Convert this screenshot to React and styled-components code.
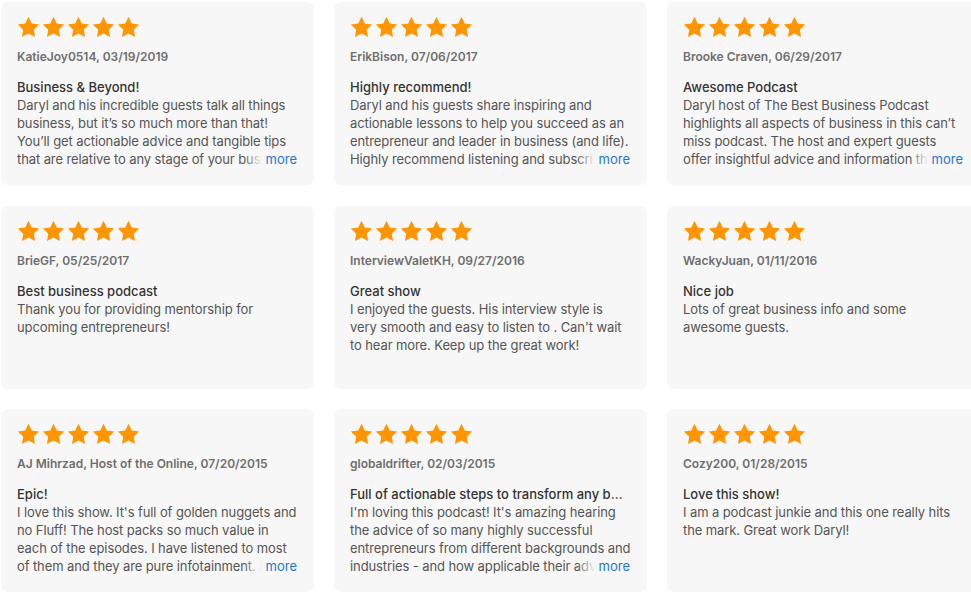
import React from "react";
import styled, { createGlobalStyle } from "styled-components";

const GlobalStyle = createGlobalStyle`
    html, body {
        margin: 0;
        padding: 0;
        background: #ffffff;
        overflow: hidden;
    }
    body {
        font-family: Inter, "Noto Sans", "Liberation Sans", sans-serif;
        -webkit-font-smoothing: antialiased;
    }
`

const Page = styled.div`
    padding: 2px 0 0 1px;
    width: 1100px;
`

const Grid = styled.div`
    display: grid;
    grid-template-columns: repeat(3, 313px);
    grid-auto-rows: 183px;
    column-gap: 20px;
    row-gap: 20.5px;
`

const Card = styled.div`
    background-color: #f7f7f7;
    border-radius: 7px;
    padding: 13px 15px 0 16px;
    box-sizing: border-box;
    display: flex;
    flex-direction: column;
    overflow: hidden;
`

const Stars = styled.div`
    display: flex;
    height: 25px;
    margin-left: -1px;
`

const Author = styled.div`
    margin-top: 9px;
    font-size: 12px;
    line-height: 16px;
    font-weight: 600;
    color: #6e6e6e;
    white-space: nowrap;
`

const Title = styled.div`
    margin-top: 13px;
    font-size: 13px;
    line-height: 18px;
    font-weight: 500;
    color: #333333;
    white-space: nowrap;
    overflow: hidden;
    text-overflow: ellipsis;
    padding-right: 2px;
`

const BodyWrap = styled.div`
    position: relative;
    max-height: 72px;
    overflow: hidden;
`

const Body = styled.p`
    margin: 0;
    font-size: 13px;
    line-height: 18px;
    color: #555555;
    letter-spacing: -0.1px;
`

const More = styled.a`
    position: absolute;
    right: 2px;
    bottom: 0;
    line-height: 18px;
    font-size: 13px;
    color: #1f76d2;
    padding-left: 22px;
    background: linear-gradient(to right, rgba(247, 247, 247, 0), #f7f7f7 18px);
    cursor: pointer;
`

function Star(){
    return(
        <svg width="25" height="25" viewBox="0 0 24 24">
            <path fill="#ff9500" d="M12 1.6l3.1 6.5 7.1 1-5.15 4.95 1.25 7.05L12 17.75 5.7 21.1l1.25-7.05L1.8 9.1l7.1-1z" />
        </svg>
    )
}

const reviews = [
    {
        author: "KatieJoy0514, 03/19/2019",
        title: "Business & Beyond!",
        body: "Daryl and his incredible guests talk all things business, but it’s so much more than that! You’ll get actionable advice and tangible tips that are relative to any stage of your business and life journey so far.",
        more: true,
    },
    {
        author: "ErikBison, 07/06/2017",
        title: "Highly recommend!",
        body: "Daryl and his guests share inspiring and actionable lessons to help you succeed as an entrepreneur and leader in business (and life). Highly recommend listening and subscribing to this podcast today.",
        more: true,
    },
    {
        author: "Brooke Craven, 06/29/2017",
        title: "Awesome Podcast",
        body: "Daryl host of The Best Business Podcast highlights all aspects of business in this can’t miss podcast. The host and expert guests offer insightful advice and information that will help you grow.",
        more: true,
    },
    {
        author: "BrieGF, 05/25/2017",
        title: "Best business podcast",
        body: "Thank you for providing mentorship for upcoming entrepreneurs!",
    },
    {
        author: "InterviewValetKH, 09/27/2016",
        title: "Great show",
        body: "I enjoyed the guests. His interview style is very smooth and easy to listen to . Can't wait to hear more. Keep up the great work!",
    },
    {
        author: "WackyJuan, 01/11/2016",
        title: "Nice job",
        body: "Lots of great business info and some awesome guests.",
    },
    {
        author: "AJ Mihrzad, Host of the Online, 07/20/2015",
        title: "Epic!",
        body: "I love this show. It's full of golden nuggets and no Fluff! The host packs so much value in each of the episodes. I have listened to most of them and they are pure infotainment. I highly recommend it.",
        more: true,
    },
    {
        author: "globaldrifter, 02/03/2015",
        title: "Full of actionable steps to transform any business",
        body: "I'm loving this podcast! It's amazing hearing the advice of so many highly successful entrepreneurs from different backgrounds and industries - and how applicable their advice is to my own journey.",
        more: true,
    },
    {
        author: "Cozy200, 01/28/2015",
        title: "Love this show!",
        body: "I am a podcast junkie and this one really hits the mark. Great work Daryl!",
    },
]

function Review({ review }){
    return(
        <Card>
            <Stars>
                {[0, 1, 2, 3, 4].map((i) => <Star key={i} />)}
            </Stars>
            <Author>{review.author}</Author>
            <Title>{review.title}</Title>
            <BodyWrap>
                <Body>{review.body}</Body>
                {review.more ? <More>more</More> : null}
            </BodyWrap>
        </Card>
    )
}

function App(){
    return(
        <Page>
            <GlobalStyle />
            <Grid>
                {reviews.map((r) => <Review key={r.author} review={r} />)}
            </Grid>
        </Page>
    )
}

export default App;
